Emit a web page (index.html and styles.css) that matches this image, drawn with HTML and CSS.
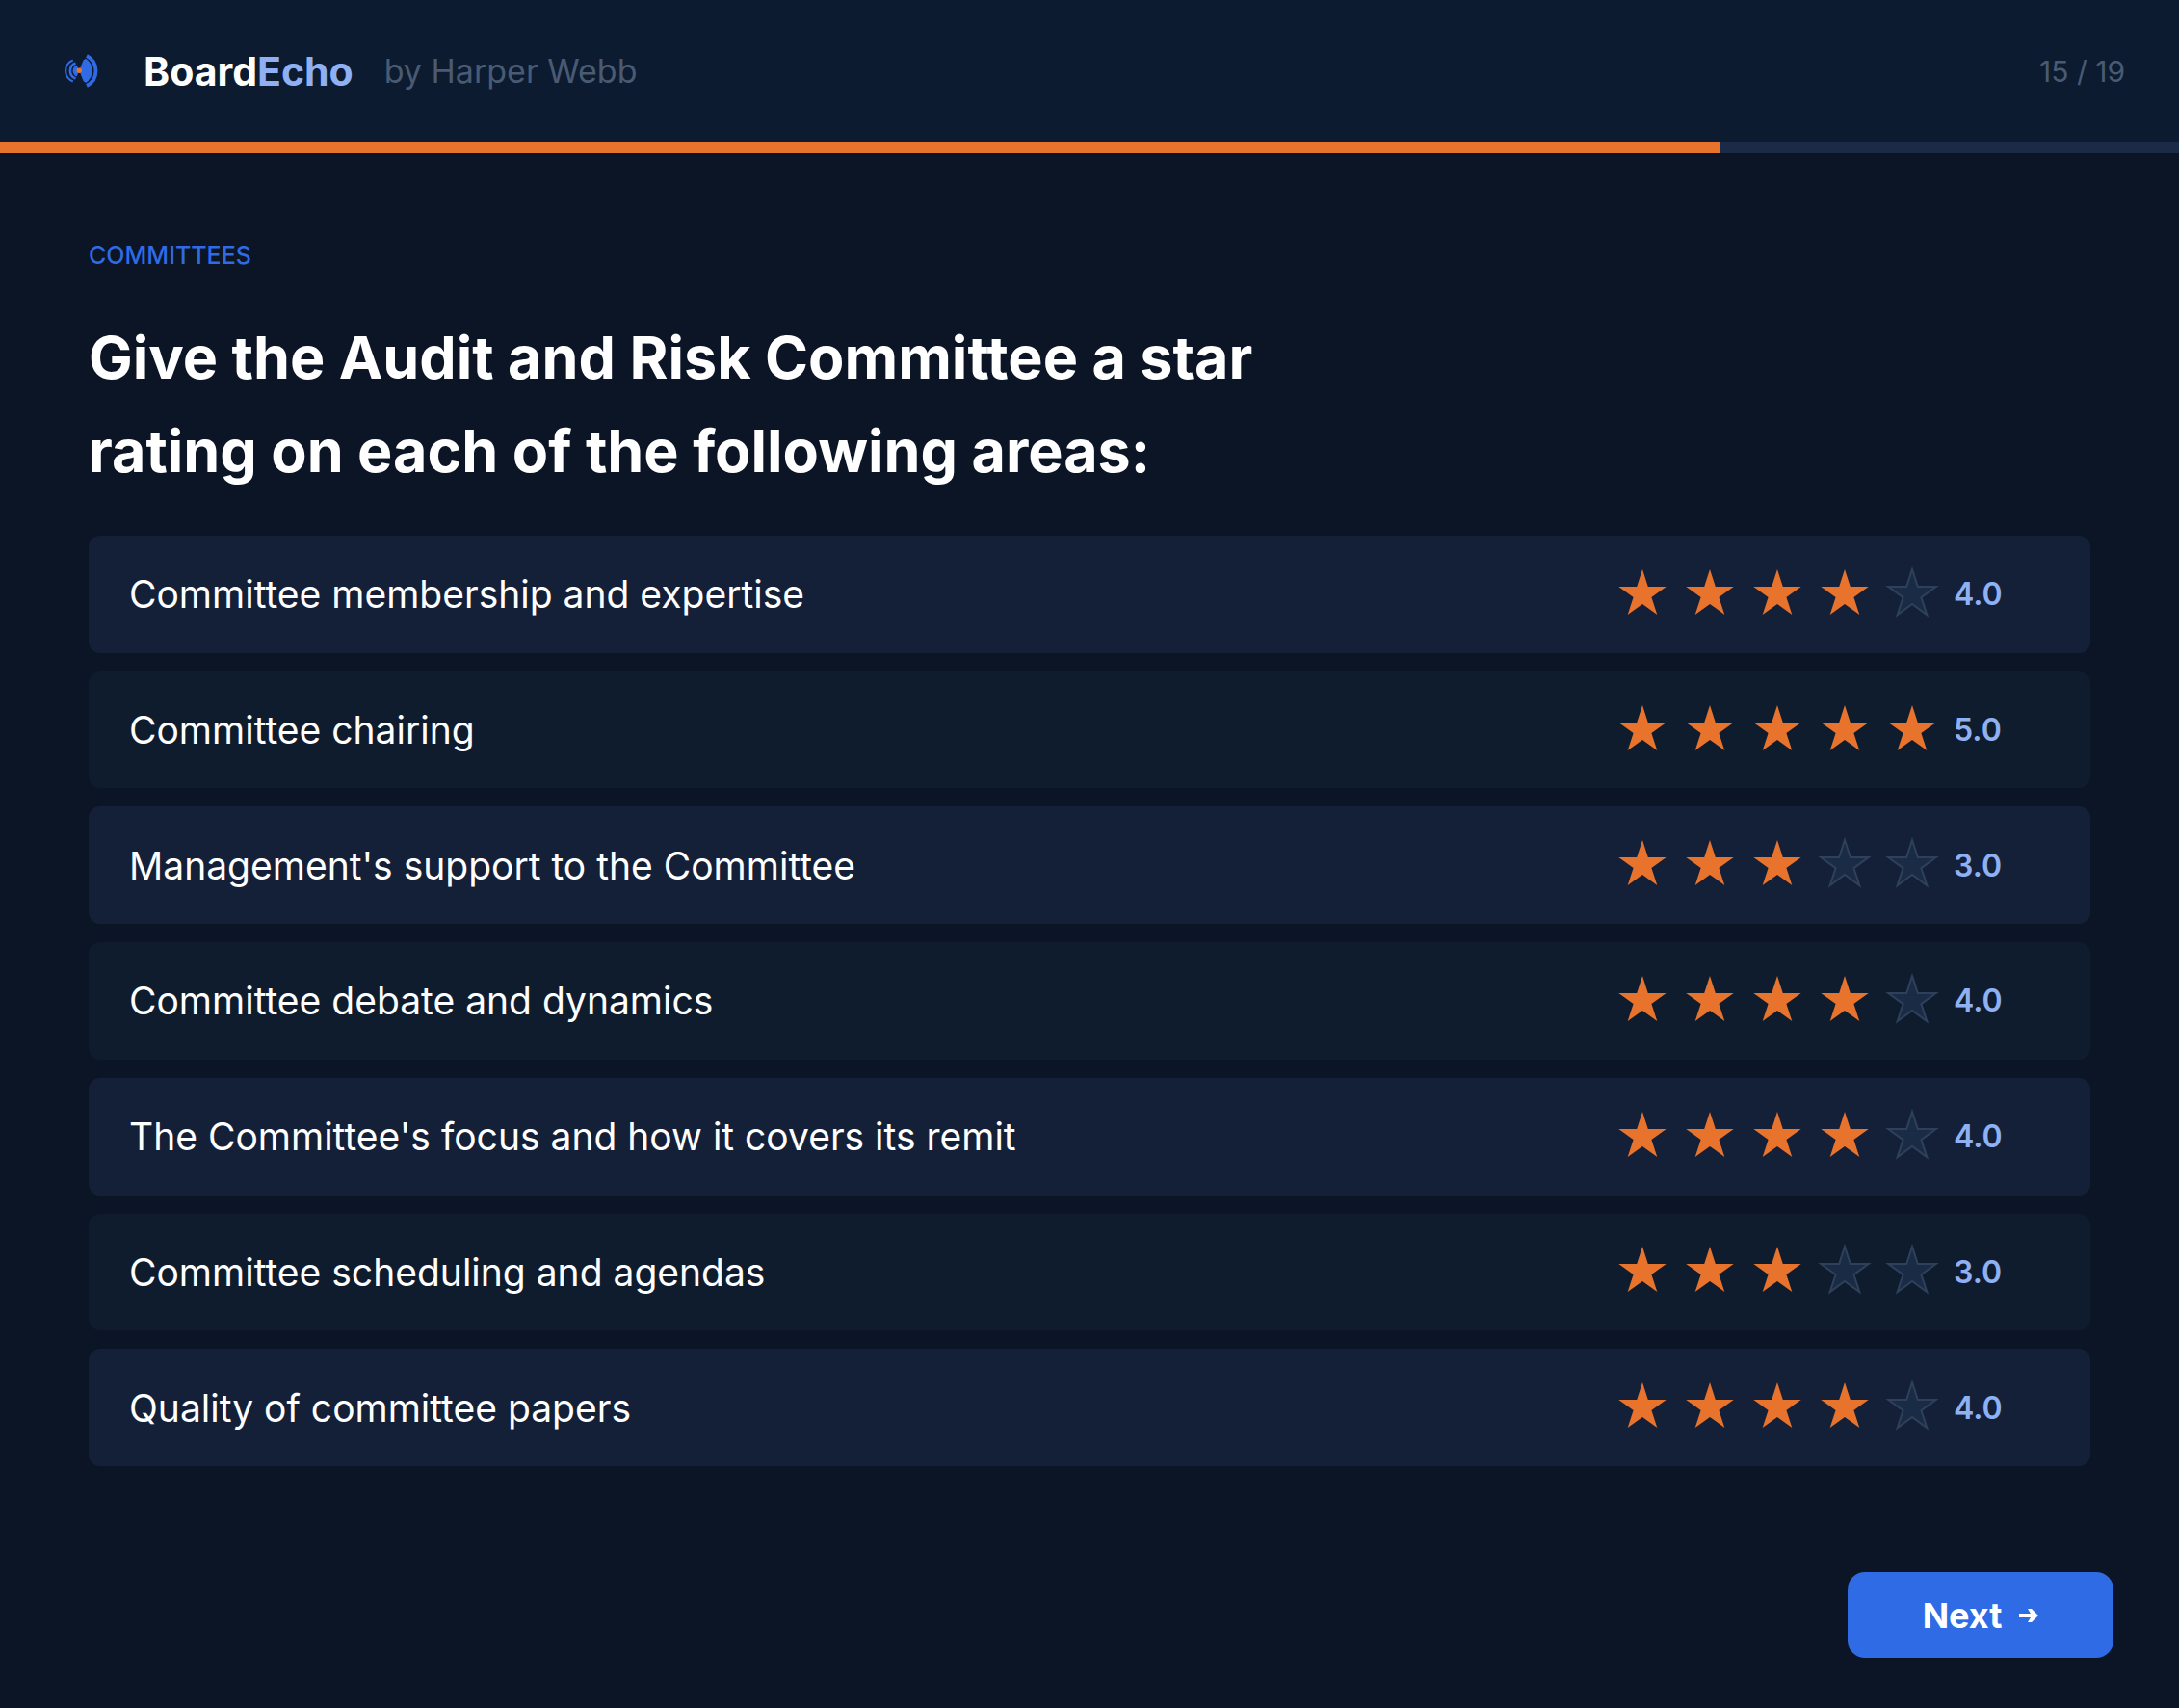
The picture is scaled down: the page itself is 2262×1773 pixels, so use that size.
FILE: index.html
```
<!DOCTYPE html>
<html lang="en">
<head>
    <meta charset="UTF-8">
    <meta name="viewport" content="width=device-width, initial-scale=1.0">
    <title>BoardEcho - Committees</title>
    <link rel="stylesheet" href="styles.css">
</head>
<body>
    <header class="header">
        <div class="brand">
            <svg class="logo" viewBox="0 0 44 44" aria-hidden="true">
                <g fill="none" stroke="#2f6be4">
                    <path d="M28 6 A17.4 17.4 0 0 1 28 37" stroke-width="3.8"/>
                    <path d="M13.8 10.5 A11.7 11.7 0 0 0 13.8 32.5" stroke-width="2.2"/>
                    <path d="M16.5 13.5 A8.5 8.5 0 0 0 16.5 29.5" stroke-width="2.6"/>
                </g>
                <path fill="#2f6be4" d="M20.3 21.3 L24.5 10.5 L27 8.7 A15 15 0 0 1 27 34 L24.5 32 Z"/>
                <path fill="#2f6be4" d="M20.3 21.3 L17.5 15.5 A6.6 6.6 0 0 0 17.5 27.5 Z"/>
                <circle cx="20.3" cy="21.3" r="2.7" fill="#e8732c"/>
            </svg>
            <span class="brand-name">Board<span class="brand-accent">Echo</span></span>
            <span class="byline">by Harper Webb</span>
        </div>
        <span class="step">15 / 19</span>
    </header>
    <div class="progress">
        <div class="progress-fill" style="width: 78.9%"></div>
    </div>

    <main class="survey">
        <p class="section-label">COMMITTEES</p>
        <h1>Give the Audit and Risk Committee a star<br>rating on each of the following areas:</h1>
        <ul class="ratings" id="ratings"></ul>
    </main>

    <footer class="footer">
        <button type="button" class="next">Next
            <svg class="arrow" viewBox="0 0 20 14" aria-hidden="true">
                <path d="M0 5 H12 L9 0 H13 L20 7 L13 14 H9 L12 9 H0 Z" fill="#fff"/>
            </svg>
        </button>
    </footer>

    <script src="script.js"></script>
</body>
</html>
```

FILE: styles.css
```
* {
    box-sizing: border-box;
}

body {
    margin: 0;
    min-height: 100vh;
    display: flex;
    flex-direction: column;
    background-color: #0b1525;
    color: #fff;
    font-family: 'Inter', sans-serif;
}

.header {
    display: flex;
    justify-content: space-between;
    align-items: center;
    height: 147px;
    padding: 0 56px 0 62px;
    background-color: #0c1b30;
}

.brand {
    display: flex;
    align-items: center;
}

.logo {
    width: 44px;
    height: 44px;
    margin-right: 43px;
}

.brand-name {
    font-size: 41px;
    font-weight: 700;
}

.brand-accent {
    color: #8fb1f3;
}

.byline,
.step {
    color: #4a5a73;
}

.byline {
    margin-left: 32px;
    font-size: 34px;
}

.step {
    font-size: 30px;
}

.progress {
    height: 12px;
    background-color: #1b2a47;
}

.progress-fill {
    height: 100%;
    background-color: #e8732c;
}

.survey {
    padding: 88px 92px 0;
}

.section-label {
    margin: 0;
    font-size: 25px;
    line-height: 36px;
    font-weight: 500;
    color: #2f6be4;
}

h1 {
    margin: 40px 0 39px;
    font-size: 61px;
    line-height: 97px;
    font-weight: 700;
}

.ratings {
    display: grid;
    grid-auto-rows: 1fr;
    gap: 19px;
    min-height: 966px;
    margin: 0;
    padding: 0;
    list-style: none;
}

.rating {
    display: flex;
    align-items: center;
    padding: 0 42px;
    border-radius: 12px;
    background-color: #0f1c2e;
}

.rating:nth-child(odd) {
    background-color: #142038;
}

.area {
    flex: 1;
    font-size: 39px;
}

.stars {
    display: flex;
}

.star {
    width: 70px;
    height: 70px;
    padding: 0;
    border: none;
    background: none;
    cursor: pointer;
}

.star svg {
    display: block;
    width: 100%;
    height: 100%;
    fill: #1a2b45;
    stroke: #2f405a;
    stroke-width: 2;
}

.star.filled svg {
    fill: #e8732c;
    stroke: none;
}

.score {
    width: 100px;
    margin-left: 8px;
    font-size: 32px;
    font-weight: 600;
    color: #8fb1f3;
}

.footer {
    display: flex;
    justify-content: flex-end;
    padding: 110px 68px 48px;
}

.next {
    display: flex;
    justify-content: center;
    align-items: center;
    gap: 18px;
    width: 276px;
    height: 89px;
    border: none;
    border-radius: 18px;
    background-color: #2f6be4;
    color: #fff;
    font-family: inherit;
    font-size: 36px;
    font-weight: 700;
    cursor: pointer;
}

.arrow {
    width: 20px;
    height: 14px;
}
```

FILE: script.js
```
const areas = [
    { name: "Committee membership and expertise", score: 4 },
    { name: "Committee chairing", score: 5 },
    { name: "Management's support to the Committee", score: 3 },
    { name: "Committee debate and dynamics", score: 4 },
    { name: "The Committee's focus and how it covers its remit", score: 4 },
    { name: "Committee scheduling and agendas", score: 3 },
    { name: "Quality of committee papers", score: 4 }
];

const starSvg = '<svg viewBox="-35 -35 70 70" aria-hidden="true"><polygon points="0,-26 5.8,-8 24.7,-8 9.4,3.1 15.3,21 0,9.9 -15.3,21 -9.4,3.1 -24.7,-8 -5.8,-8"/></svg>';
const list = document.getElementById('ratings');

function setScore(row, score) {
    row.querySelectorAll('.star').forEach((star, i) => {
        star.classList.toggle('filled', i < score);
    });
    row.querySelector('.score').textContent = score.toFixed(1);
}

areas.forEach((area) => {
    const row = document.createElement('li');
    row.className = 'rating';
    row.innerHTML = '<span class="area"></span><div class="stars"></div><span class="score"></span>';
    row.querySelector('.area').textContent = area.name;

    for (let i = 1; i <= 5; i++) {
        const star = document.createElement('button');
        star.type = 'button';
        star.className = 'star';
        star.setAttribute('aria-label', `${area.name}: ${i} of 5`);
        star.innerHTML = starSvg;
        star.addEventListener('click', () => setScore(row, i));
        row.querySelector('.stars').appendChild(star);
    }

    setScore(row, area.score);
    list.appendChild(row);
});
```
